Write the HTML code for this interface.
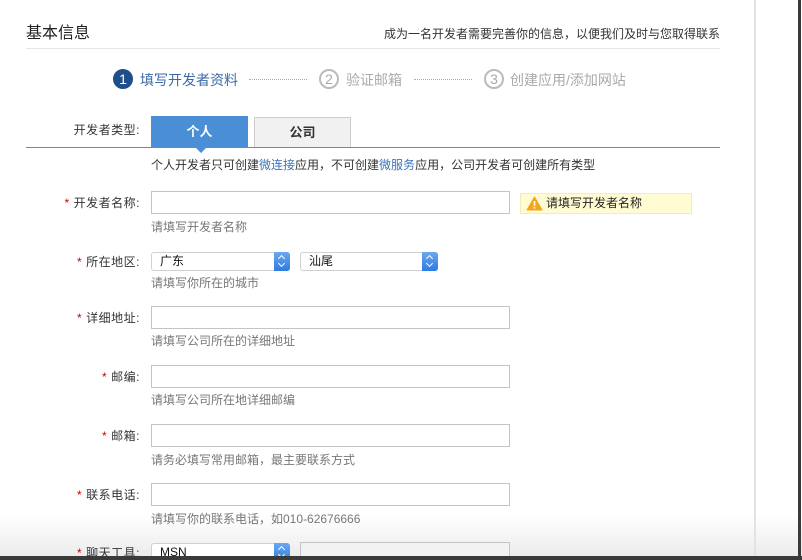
<!DOCTYPE html>
<html><head><meta charset="utf-8"><style>
*{margin:0;padding:0;box-sizing:border-box}
html,body{width:802px;height:560px;overflow:hidden}
body{background:linear-gradient(to bottom,#fff 0,#fff 515px,#ececec 556px);position:relative;font-family:"Liberation Sans","Noto Sans CJK SC",sans-serif;font-size:12px;color:#333}
.a{position:absolute;white-space:nowrap}
.lbl{position:absolute;right:662px;font-size:12px;color:#333;line-height:14px;letter-spacing:0.5px}
.lbl b{color:#c00;font-weight:normal;margin-right:4px}
.inp{position:absolute;left:151px;width:359px;height:23px;border:1px solid #c4c4c4;background:#fff}
.help{position:absolute;left:151px;color:#777;font-size:12px;line-height:14px}
.sel{position:absolute;height:19px;border:1px solid #d0d0d0;border-radius:3px;background:#fff;font-size:12px;line-height:17px;padding-left:8px;color:#111}
.sel i{position:absolute;right:-1px;top:-1px;width:16px;height:19px;background:linear-gradient(#6aa8f0,#2f7be0);border-radius:0 3px 3px 0}
.sel i:before{content:"";position:absolute;left:5px;top:4px;width:4px;height:4px;border-left:1.5px solid #fff;border-top:1.5px solid #fff;transform:rotate(45deg)}
.sel i:after{content:"";position:absolute;left:5px;top:9px;width:4px;height:4px;border-right:1.5px solid #fff;border-bottom:1.5px solid #fff;transform:rotate(45deg)}
.circ{position:absolute;width:20px;height:20px;border-radius:50%;text-align:center;line-height:18px;font-size:14px}
.dots{position:absolute;height:0;border-top:1px dotted #aaa;top:79px}
</style></head><body>
<div class="a" style="left:26px;top:19px;font-size:16px;color:#222">基本信息</div>
<div class="a" style="right:82px;top:25px;font-size:12px;color:#333">成为一名开发者需要完善你的信息，以便我们及时与您取得联系</div>
<div class="a" style="left:26px;top:48px;width:694px;height:1px;background:#e6e6e6"></div>

<div class="circ" style="left:113px;top:69px;background:#1f4e8a;color:#fff;border:1px solid #1f4e8a">1</div>
<div class="a" style="left:140px;top:70px;font-size:14px;color:#3b6aa6">填写开发者资料</div>
<div class="dots" style="left:249px;width:58px"></div>
<div class="circ" style="left:319px;top:69px;border:2px solid #bbb;color:#aaa;line-height:16px">2</div>
<div class="a" style="left:346px;top:70px;font-size:14px;color:#aaa">验证邮箱</div>
<div class="dots" style="left:414px;width:58px"></div>
<div class="circ" style="left:484px;top:69px;border:2px solid #bbb;color:#aaa;line-height:16px">3</div>
<div class="a" style="left:510px;top:70px;font-size:14px;color:#aaa">创建应用/添加网站</div>

<div class="lbl" style="top:123px">开发者类型:</div>
<div class="a" style="left:151px;top:116px;width:97px;height:32px;background:#4a8fd6;color:#fff;text-align:center;line-height:32px;font-size:13px;font-weight:bold">个人</div>
<div class="a" style="left:195px;top:147px;width:0;height:0;border-left:6px solid transparent;border-right:6px solid transparent;border-top:6px solid #4a8fd6"></div>
<div class="a" style="left:254px;top:117px;width:97px;height:31px;background:#f1f1f1;border:1px solid #ccc;border-bottom:none;text-align:center;line-height:30px;font-size:13px;font-weight:bold;color:#333">公司</div>
<div class="a" style="left:26px;top:147px;width:694px;height:1px;background:#5d8cc3"></div>
<div class="a" style="left:151px;top:156px;color:#333">个人开发者只可创建<span style="color:#3b73b9">微连接</span>应用，不可创建<span style="color:#3b73b9">微服务</span>应用，公司开发者可创建所有类型</div>

<div class="lbl" style="top:196px"><b>*</b>开发者名称:</div>
<div class="inp" style="top:191px"></div>
<div class="a" style="left:520px;top:193px;width:172px;height:21px;background:#fffbd2;border:1px solid #f4ecb8;font-size:12px;line-height:19px;padding-left:25px;color:#222">请填写开发者名称
<svg style="position:absolute;left:5px;top:2px" width="17" height="15" viewBox="0 0 17 15"><path d="M8.5 1 L16 14 L1 14 Z" fill="#f2a51e" stroke="#f2a51e" stroke-linejoin="round"/><rect x="7.7" y="5" width="1.6" height="5" fill="#fff"/><rect x="7.7" y="11" width="1.6" height="1.6" fill="#fff"/></svg></div>
<div class="help" style="top:220px">请填写开发者名称</div>

<div class="lbl" style="top:255px"><b>*</b>所在地区:</div>
<div class="sel" style="left:151px;top:252px;width:139px">广东<i></i></div>
<div class="sel" style="left:300px;top:252px;width:138px">汕尾<i></i></div>
<div class="help" style="top:276px">请填写你所在的城市</div>

<div class="lbl" style="top:311px"><b>*</b>详细地址:</div>
<div class="inp" style="top:306px"></div>
<div class="help" style="top:334px">请填写公司所在的详细地址</div>

<div class="lbl" style="top:370px"><b>*</b>邮编:</div>
<div class="inp" style="top:365px"></div>
<div class="help" style="top:393px">请填写公司所在地详细邮编</div>

<div class="lbl" style="top:429px"><b>*</b>邮箱:</div>
<div class="inp" style="top:424px"></div>
<div class="help" style="top:453px">请务必填写常用邮箱，最主要联系方式</div>

<div class="lbl" style="top:488px"><b>*</b>联系电话:</div>
<div class="inp" style="top:483px"></div>
<div class="help" style="top:512px">请填写你的联系电话，如010-62676666</div>

<div class="lbl" style="top:546px"><b>*</b>聊天工具:</div>
<div class="sel" style="left:151px;top:543px;width:139px">MSN<i></i></div>
<div class="inp" style="top:542px;left:300px;width:210px;background:#f2f2f2"></div>

<div class="a" style="left:754px;top:0;width:2px;height:560px;background:#e3e3e3"></div>
<div class="a" style="left:798px;top:0;width:3px;height:560px;background:#3a3a3a"></div>
<div class="a" style="left:0;top:556px;width:802px;height:4px;background:#3a3a3a"></div>
</body></html>
